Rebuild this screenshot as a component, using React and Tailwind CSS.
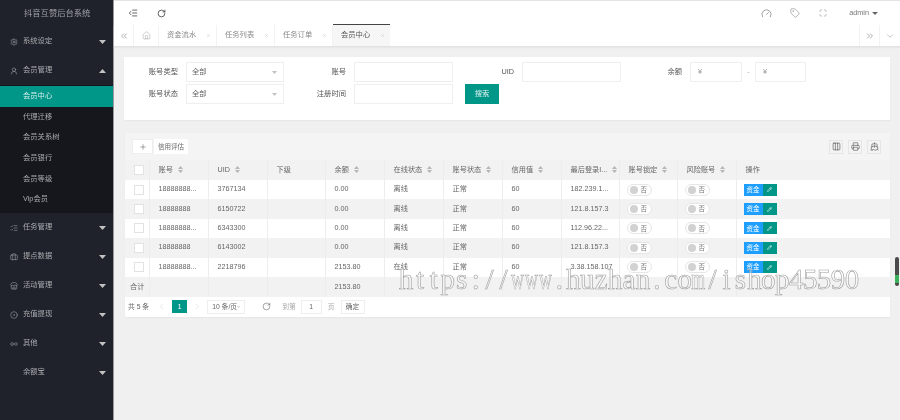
import React from "react";
import { Settings, UserRound, ListChecks, Briefcase, Store, CircleDot, Infinity as InfinityIcon, RotateCw, Gauge, Tag, Maximize, ChevronsLeft, ChevronsRight, ChevronDown, ChevronLeft, ChevronRight, Home, X, Plus, Columns3, Printer, Ship, Pencil, IndentDecrease } from "lucide-react";

const Caret = ({ up }) => (
  <svg width="7" height="4" viewBox="0 0 7 4" className="ml-auto mr-[7px]"><path d={up ? "M0 4L3.5 0L7 4Z" : "M0 0L3.5 4L7 0Z"} fill="#c2c2c2" /></svg>
);
const Sort = () => (
  <svg width="5" height="7" viewBox="0 0 5 7" className="ml-[5px] shrink-0"><path d="M0 3L2.5 0L5 3ZM0 4L2.5 7L5 4Z" fill="#b5b5b5" /></svg>
);

const MenuRow = ({ icon: I, label, up }) => (
  <div className="flex h-[29px] items-center pl-[10px] text-[#a9abae]">
    <span className="flex w-[13px] justify-start">{I ? <I size={8} strokeWidth={1.6} /> : null}</span>
    <span>{label}</span>
    <Caret up={up} />
  </div>
);

const subs = ["会员中心", "代理迁移", "会员关系树", "会员银行", "会员等级", "Vip会员"];

const Sidebar = () => (
  <aside className="flex h-[420px] w-[114px] shrink-0 flex-col border-r border-[#9a9a9a] bg-[#1f222b] text-[7.3px]">
    <div className="flex h-[27px] items-center pl-[24px] text-[8.3px] text-[#a0a2a5]">抖音互赞后台系统</div>
    <MenuRow icon={Settings} label="系统设定" />
    <MenuRow icon={UserRound} label="会员管理" up />
    <div className="bg-[#15171d] pb-[3px] pt-[1px]">
      {subs.map((s, i) => (
        <div key={s} className={`flex h-[20.7px] items-center pl-[23px] ${i === 0 ? "bg-[#009688] text-[#d8efec]" : "text-[#a9abae]"}`}>{s}</div>
      ))}
    </div>
    <MenuRow icon={ListChecks} label="任务管理" />
    <MenuRow icon={Briefcase} label="提点数据" />
    <MenuRow icon={Store} label="活动管理" />
    <MenuRow icon={CircleDot} label="充值提现" />
    <MenuRow icon={InfinityIcon} label="其他" />
    <MenuRow label="余额宝" />
  </aside>
);

const Header = () => (
  <header className="flex h-[25px] items-center border-t border-[#e4e4e4] bg-white text-[#333]">
    <span className="ml-[14px]"><IndentDecrease size={10} strokeWidth={1.8} /></span>
    <span className="ml-[19px]"><RotateCw size={9} strokeWidth={2} /></span>
    <span className="ml-auto text-[#777]"><Gauge size={11} strokeWidth={1.5} /></span>
    <span className="ml-[18px] text-[#888]"><Tag size={10} strokeWidth={1.5} /></span>
    <span className="ml-[19px] text-[#888]"><Maximize size={8} strokeWidth={1.5} /></span>
    <span className="ml-[22px] text-[7.3px] text-[#777]">admin</span>
    <svg width="6" height="3" viewBox="0 0 6 3" className="ml-[3px] mr-[22px]"><path d="M0 0L3 3L6 0Z" fill="#666" /></svg>
  </header>
);

const tabs = ["资金流水", "任务列表", "任务订单"];
const Tabs = () => (
  <div className="flex h-[22px] items-stretch border-b border-[#e2e2e2] bg-white text-[7.3px] text-[#8a8a8a] shadow-[0_1px_1px_#e8e8e8]">
    <div className="flex w-[20px] items-center justify-center border-r border-[#f2f2f2] text-[#777]"><ChevronsLeft size={10} strokeWidth={1.4} /></div>
    <div className="flex w-[25px] items-center justify-center border-r border-[#f2f2f2] text-[#999]"><Home size={9} strokeWidth={1.2} /></div>
    {tabs.map((t) => (
      <div key={t} className="flex w-[58px] items-center border-r border-[#f2f2f2] pl-[8px]">
        <span>{t}</span>
        <X size={5} className="ml-[10px] text-[#c2c2c2]" />
      </div>
    ))}
    <div className="-mt-px flex w-[57px] items-center border-t-[1.5px] border-[#444] bg-[#f6f6f6] pl-[8px] text-[#555]">
      <span>会员中心</span>
      <X size={5} className="ml-[10px] text-[#c2c2c2]" />
    </div>
    <div className="ml-auto flex w-[20px] items-center justify-center border-l border-[#f2f2f2] text-[#777]"><ChevronsRight size={10} strokeWidth={1.4} /></div>
    <div className="flex w-[21px] items-center justify-center border-l border-[#f2f2f2] text-[#888]"><ChevronDown size={10} strokeWidth={1.2} /></div>
  </div>
);

const Box = ({ className = "", children }) => (
  <div className={`flex h-[20px] items-center border border-[#efefef] bg-white text-[7.3px] text-[#666] ${className}`}>{children}</div>
);
const Label = ({ w, children }) => (
  <div className={`pr-[8px] text-right text-[7.3px] text-[#555] ${w}`}>{children}</div>
);
const Sel = () => (
  <Box className="w-[98px] pl-[5px]">
    全部
    <svg width="5" height="3" viewBox="0 0 5 3" className="ml-auto mr-[6px]"><path d="M0 0L2.5 3L5 0Z" fill="#c2c2c2" /></svg>
  </Box>
);

const SearchPanel = () => (
  <section className="mx-[10px] mt-[10px] flex h-[63px] flex-col gap-[2px] bg-white pt-[5px] shadow-[0_1px_1px_#e8e8e8]">
    <div className="flex items-center">
      <Label w="w-[62px]">账号类型</Label>
      <Sel />
      <Label w="w-[70px]">账号</Label>
      <Box className="w-[99px]" />
      <Label w="w-[69px]">UID</Label>
      <Box className="w-[99px]" />
      <Label w="w-[69px]">余额</Label>
      <Box className="w-[52px] pl-[7px] text-[#999]">¥</Box>
      <div className="w-[13px] text-center text-[7px] text-[#aaa]">-</div>
      <Box className="w-[51px] pl-[7px] text-[#999]">¥</Box>
    </div>
    <div className="flex items-center">
      <Label w="w-[62px]">账号状态</Label>
      <Sel />
      <Label w="w-[70px]">注册时间</Label>
      <Box className="w-[99px]" />
      <button className="ml-[12px] h-[20px] w-[34px] bg-[#009688] text-[7.3px] text-[#e2f3f1]">搜索</button>
    </div>
  </section>
);

const cols = [24, 59, 59, 58, 59, 59, 59, 59, 58, 58, 59, 154];
const heads = [
  ["", false], ["账号", true], ["UID", true], ["下级", false], ["余额", true], ["在线状态", true],
  ["账号状态", true], ["信用值", true], ["最后登录I...", true], ["账号锁定", true], ["风险账号", true], ["操作", false],
];
const rows = [
  ["18888888...", "3767134", "0.00", "离线", "正常", "60", "182.239.1..."],
  ["18888888", "6150722", "0.00", "离线", "正常", "60", "121.8.157.3"],
  ["18888888...", "6343300", "0.00", "离线", "正常", "60", "112.96.22..."],
  ["18888888", "6143002", "0.00", "离线", "正常", "60", "121.8.157.3"],
  ["18888888...", "2218796", "2153.80", "在线", "正常", "60", "3.38.158.107"],
];
const cell = "h-[19.4px] overflow-hidden whitespace-nowrap border-r border-[#ededed] px-[9px] py-0 text-left font-normal";
const tight = "h-[19.4px] overflow-hidden whitespace-nowrap border-r border-[#ededed] px-[7px] py-0 text-left font-normal";
const Check = () => <span className="mx-auto block h-[10px] w-[10px] border border-[#e2e2e2] bg-white" />;
const Toggle = () => (
  <span className="flex h-[12px] w-[25px] items-center rounded-full border border-[#e6e6e6] bg-white pl-[2px] text-[6.5px] text-[#777]">
    <span className="h-[8px] w-[8px] rounded-full bg-[#d2d2d2]" />
    <span className="ml-[3px]">否</span>
  </span>
);

const TablePanel = () => (
  <section className="ml-[11px] mr-[10px] mt-[13px] flex-none bg-[#f4f4f4] shadow-[0_1px_1px_#e8e8e8]">
    <div className="flex h-[27px] items-center pl-[7px] pr-[9px]">
      <span className="flex h-[15px] w-[21px] items-center justify-center border border-[#eee] bg-white text-[#555]"><Plus size={8} strokeWidth={1.5} /></span>
      <span className="ml-px flex h-[15px] w-[34px] items-center justify-center bg-white text-[6.5px] text-[#666]">信用评估</span>
      {[Columns3, Printer, Ship].map((I, i) => (
        <span key={i} className={`flex h-[14px] w-[14px] items-center justify-center border border-[#e6e6e6] text-[#444] ${i === 0 ? "ml-auto" : "ml-[5px]"}`}><I size={9} strokeWidth={1.5} /></span>
      ))}
    </div>
    <table className="w-[765px] table-fixed border-collapse text-[7.2px] text-[#666]">
      <colgroup>{cols.map((c, i) => <col key={i} style={{ width: c }} />)}</colgroup>
      <thead>
        <tr className="bg-[#f2f2f2]">
          {heads.map(([h, s], i) => (
            <th key={i} className={`${cell} !h-[20px]`}>
              {i === 0 ? <Check /> : <span className="flex items-center">{h}{s ? <Sort /> : null}</span>}
            </th>
          ))}
        </tr>
      </thead>
      <tbody>
        {rows.map((r, i) => (
          <tr key={i} className={i % 2 ? "bg-[#f2f2f2]" : "bg-white"}>
            <td className={cell}><Check /></td>
            <td className={cell}>{r[0]}</td>
            <td className={cell}>{r[1]}</td>
            <td className={cell}></td>
            <td className={cell}>{r[2]}</td>
            <td className={cell}>{r[3]}</td>
            <td className={cell}>{r[4]}</td>
            <td className={cell}>{r[5]}</td>
            <td className={cell}>{r[6]}</td>
            <td className={tight}><Toggle /></td>
            <td className={tight}><Toggle /></td>
            <td className={tight}>
              <span className="flex h-[12px] w-[33px]">
                <span className="flex w-[19px] items-center justify-center bg-[#1e9fff] text-[6.5px] text-white">资金</span>
                <span className="flex w-[14px] items-center justify-center bg-[#009688] text-white"><Pencil size={5} strokeWidth={2.5} /></span>
              </span>
            </td>
          </tr>
        ))}
        <tr className="bg-[#f2f2f2]">
          <td className={`${cell} !h-[20px] !px-[5px]`}>合计</td>
          <td className={cell}></td><td className={cell}></td><td className={cell}></td>
          <td className={cell}>2153.80</td>
          <td className={cell}></td><td className={cell}></td><td className={cell}></td><td className={cell}></td><td className={cell}></td><td className={cell}></td><td className={cell}></td>
        </tr>
      </tbody>
    </table>
    <div className="flex h-[20px] items-center bg-white pl-[3px] text-[6.8px] text-[#666]">
      <span>共 5 条</span>
      <ChevronLeft size={9} strokeWidth={1.2} className="ml-[8px] text-[#ccc]" />
      <span className="ml-[6px] flex h-[13px] w-[15px] items-center justify-center bg-[#009688] text-white">1</span>
      <ChevronRight size={9} strokeWidth={1.2} className="ml-[6px] text-[#ccc]" />
      <span className="ml-[5px] flex h-[14px] w-[38px] items-center justify-between border border-[#eee] px-[4px] whitespace-nowrap">10 条/页<ChevronDown size={6} strokeWidth={3} className="text-[#444]" /></span>
      <RotateCw size={9} strokeWidth={1.4} className="ml-[17px] text-[#555]" />
      <span className="ml-[11px] text-[#aaa]">到第</span>
      <span className="ml-[5px] flex h-[14px] w-[21px] items-center justify-center border border-[#eee]">1</span>
      <span className="ml-[6px] text-[#aaa]">页</span>
      <span className="ml-[6px] flex h-[14px] w-[24px] items-center justify-center border border-[#eee]">确定</span>
    </div>
  </section>
);

const mark = "https://www.huzhan.com/ishop45590".split("");
const Watermark = () => (
  <div className="absolute left-[399px] top-[262px] flex whitespace-nowrap font-['Liberation_Serif',serif] text-[29px] leading-[34px] text-[#ffffff55] [-webkit-text-stroke:0.6px_#a0a0a0] [filter:blur(0.2px)]">
    {mark.map((c, i) => (
      <span key={i} className="flex w-[13.94px] justify-center">
        <span style={{ transform: c === "w" || c === "m" ? "scaleX(0.62)" : "none" }}>{c}</span>
      </span>
    ))}
  </div>
);

export default function App() {
  return (
    <div className="relative h-[420px] w-[900px] overflow-hidden font-['Liberation_Sans','Noto_Sans_CJK_SC',sans-serif]">
      <div className="flex h-[420px] w-[900px] [filter:blur(0.45px)]">
        <Sidebar />
        <main className="flex min-w-0 flex-1 flex-col bg-[#f0f0f0]">
          <Header />
          <Tabs />
          <SearchPanel />
          <TablePanel />
        </main>
      </div>
      <Watermark />
      <div className="absolute left-[895px] top-[257px] h-[29px] w-[4px] rounded-full bg-[#4a4a4a]">
        <div className="mt-[18px] h-[8px] w-[4px] bg-[#3fae5a]" />
      </div>
    </div>
  );
}
